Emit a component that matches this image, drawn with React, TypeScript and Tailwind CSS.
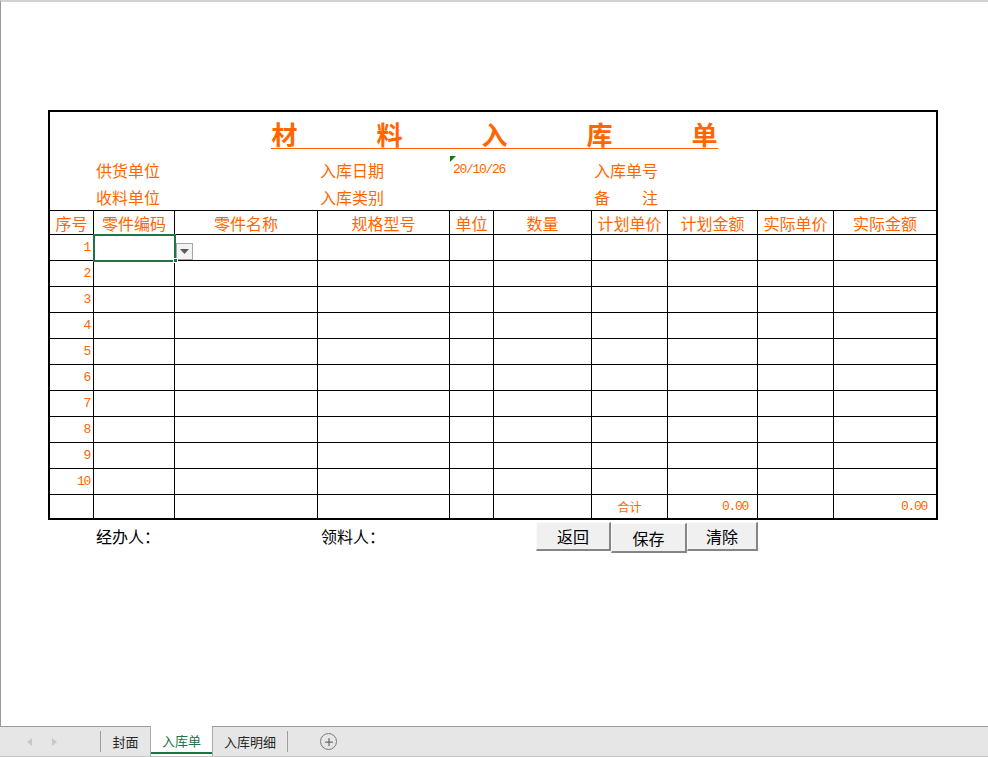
import { Plus } from 'lucide-react'

const ORANGE = 'text-[#ff6600]'
const CJK = "font-['Noto_Sans_CJK_SC',sans-serif]"
const DIGITS = "font-['Liberation_Mono',monospace] text-[13px] tracking-[-1.3px]"

const HEADERS = ['序号', '零件编码', '零件名称', '规格型号', '单位', '数量', '计划单价', '计划金额', '实际单价', '实际金额']
const ROWS = [1, 2, 3, 4, 5, 6, 7, 8, 9, 10]

// columns: 43 81 143 132 44 98 76 90 76 103 = 886
const GRID = 'grid grid-cols-[43px_81px_143px_132px_44px_98px_76px_90px_76px_103px]'

function Cell({ i, children, className = '' }: { i: number; children?: React.ReactNode; className?: string }) {
  return (
    <div className={`relative border-t border-black ${i > 0 ? 'border-l' : ''} ${className}`}>{children}</div>
  )
}

function SelectedCell() {
  return (
    <>
      <div className="absolute -left-[1px] -top-[1px] w-[83px] h-[28px] border-2 border-[#217346] z-10" />
      <div className="absolute left-[79px] top-[23px] w-[5px] h-[5px] bg-[#217346] border border-white z-20" />
      <div className="absolute left-[82px] top-[8px] w-[17px] h-[17px] bg-[#f3f3f3] border border-[#a6a6a6] z-10 flex items-center justify-center">
        <svg width="9" height="5" viewBox="0 0 9 5">
          <path d="M0 0h9L4.5 5z" fill="#595959" />
        </svg>
      </div>
    </>
  )
}

function SheetButton({ label, className }: { label: string; className: string }) {
  return (
    <div
      className={`flex items-center justify-center bg-[#f0f0f0] border-t border-l border-[#fafafa] border-b-2 border-r-2 border-b-[#858585] border-r-[#858585] text-[16px] text-black ${className}`}
    >
      {label}
    </div>
  )
}

export default function App() {
  return (
    <div className={`w-[988px] h-[757px] flex flex-col bg-white ${CJK}`}>
      <div className="flex-1 border-t-2 border-[#d2d2d2] border-l border-l-[#999999] pl-[47px] pt-[108px]">
        {/* 入库单 */}
        <div className="w-[890px] border-2 border-black">
          <div className="h-[98px] flex flex-col">
            <div className="flex justify-center pt-[7px] pl-[3px]">
              <div className={`flex gap-[79px] border-b-[1.5px] border-[#ff6600] ${ORANGE} text-[26px] font-bold leading-[29px]`}>
                {['材', '料', '入', '库', '单'].map((c) => (
                  <span key={c}>{c}</span>
                ))}
              </div>
            </div>
            <div className={`flex pl-[46px] mt-[8px] text-[16px] leading-[26px] ${ORANGE}`}>
              <span className="w-[224px]">供货单位</span>
              <span className="w-[130px]">入库日期</span>
              <span className={`relative w-[144px] ${DIGITS} pl-[3px] leading-[26px]`}>
                <span className="absolute left-0 top-[-1px] w-0 h-0 border-t-[6px] border-r-[6px] border-t-[#107c10] border-r-transparent" />
                20/10/26
              </span>
              <span>入库单号</span>
            </div>
            <div className={`flex pl-[46px] mt-[1px] text-[16px] leading-[26px] ${ORANGE}`}>
              <span className="w-[224px]">收料单位</span>
              <span className="w-[274px]">入库类别</span>
              <span className="flex w-[64px] justify-between">
                <span>备</span>
                <span>注</span>
              </span>
            </div>
          </div>

          <div className={GRID}>
            {HEADERS.map((h, i) => (
              <Cell key={h} i={i} className={`h-[24px] flex items-center justify-center text-[16px] leading-none ${ORANGE}`}>
                {h}
              </Cell>
            ))}
            {ROWS.map((r) =>
              HEADERS.map((h, i) => (
                <Cell
                  key={`${r}-${h}`}
                  i={i}
                  className={`h-[26px] ${i === 0 ? `flex items-center justify-end pr-[3px] ${DIGITS} ${ORANGE}` : ''}`}
                >
                  {i === 0 ? r : null}
                  {r === 1 && i === 1 ? <SelectedCell /> : null}
                </Cell>
              ))
            )}
            {HEADERS.map((h, i) => (
              <Cell
                key={`sum-${h}`}
                i={i}
                className={`h-[24px] flex items-center ${ORANGE} ${
                  i === 6 ? 'justify-center text-[12px]' : 'justify-end pr-[9px]'
                } ${i === 7 || i === 9 ? DIGITS : ''}`}
              >
                {i === 6 ? '合计' : i === 7 || i === 9 ? '0.00' : null}
              </Cell>
            ))}
          </div>
        </div>

        <div className="flex text-[16px] text-black">
          <span className="w-[273px] pl-[48px] pt-[4px] leading-[24px]">经办人：</span>
          <span className="w-[215px] pt-[4px] leading-[24px]">领料人：</span>
          <SheetButton label="返回" className="w-[75px] h-[29px] mt-[2px]" />
          <SheetButton label="保存" className="w-[76px] h-[30px] mt-[3px]" />
          <SheetButton label="清除" className="w-[71px] h-[29px] mt-[2px]" />
        </div>
      </div>

      {/* sheet tabs */}
      <div className="h-[31px] border-t border-[#9b9b9b] bg-[#e6e6e6] border-b border-b-[#c6c6c6] flex items-stretch text-[13px] text-[#262626]">
        <div className="w-[100px] flex items-center gap-[20px] pl-[27px]">
          <svg width="5" height="8" viewBox="0 0 5 8">
            <path d="M5 0v8L0 4z" fill="#c8c8c8" />
          </svg>
          <svg width="5" height="8" viewBox="0 0 5 8">
            <path d="M0 0v8l5-4z" fill="#c8c8c8" />
          </svg>
        </div>
        <div className="w-px my-[4px] bg-[#9e9e9e]" />
        <div className="w-[49px] flex items-center justify-center">封面</div>
        <div className="w-[63px] -mt-px bg-white border-l border-r border-[#ababab] flex items-center justify-center text-[#217346] relative">
          入库单
          <div className="absolute left-0 right-0 bottom-[2px] h-[2px] bg-[#217346]" />
        </div>
        <div className="w-[74px] flex items-center justify-center">入库明细</div>
        <div className="w-px my-[4px] bg-[#9e9e9e]" />
        <div className="flex items-center pl-[32px]">
          <div className="w-[17px] h-[17px] rounded-full border border-[#7a7a7a] flex items-center justify-center">
            <Plus size={12} strokeWidth={2.5} color="#6b6b6b" />
          </div>
        </div>
      </div>
    </div>
  )
}
